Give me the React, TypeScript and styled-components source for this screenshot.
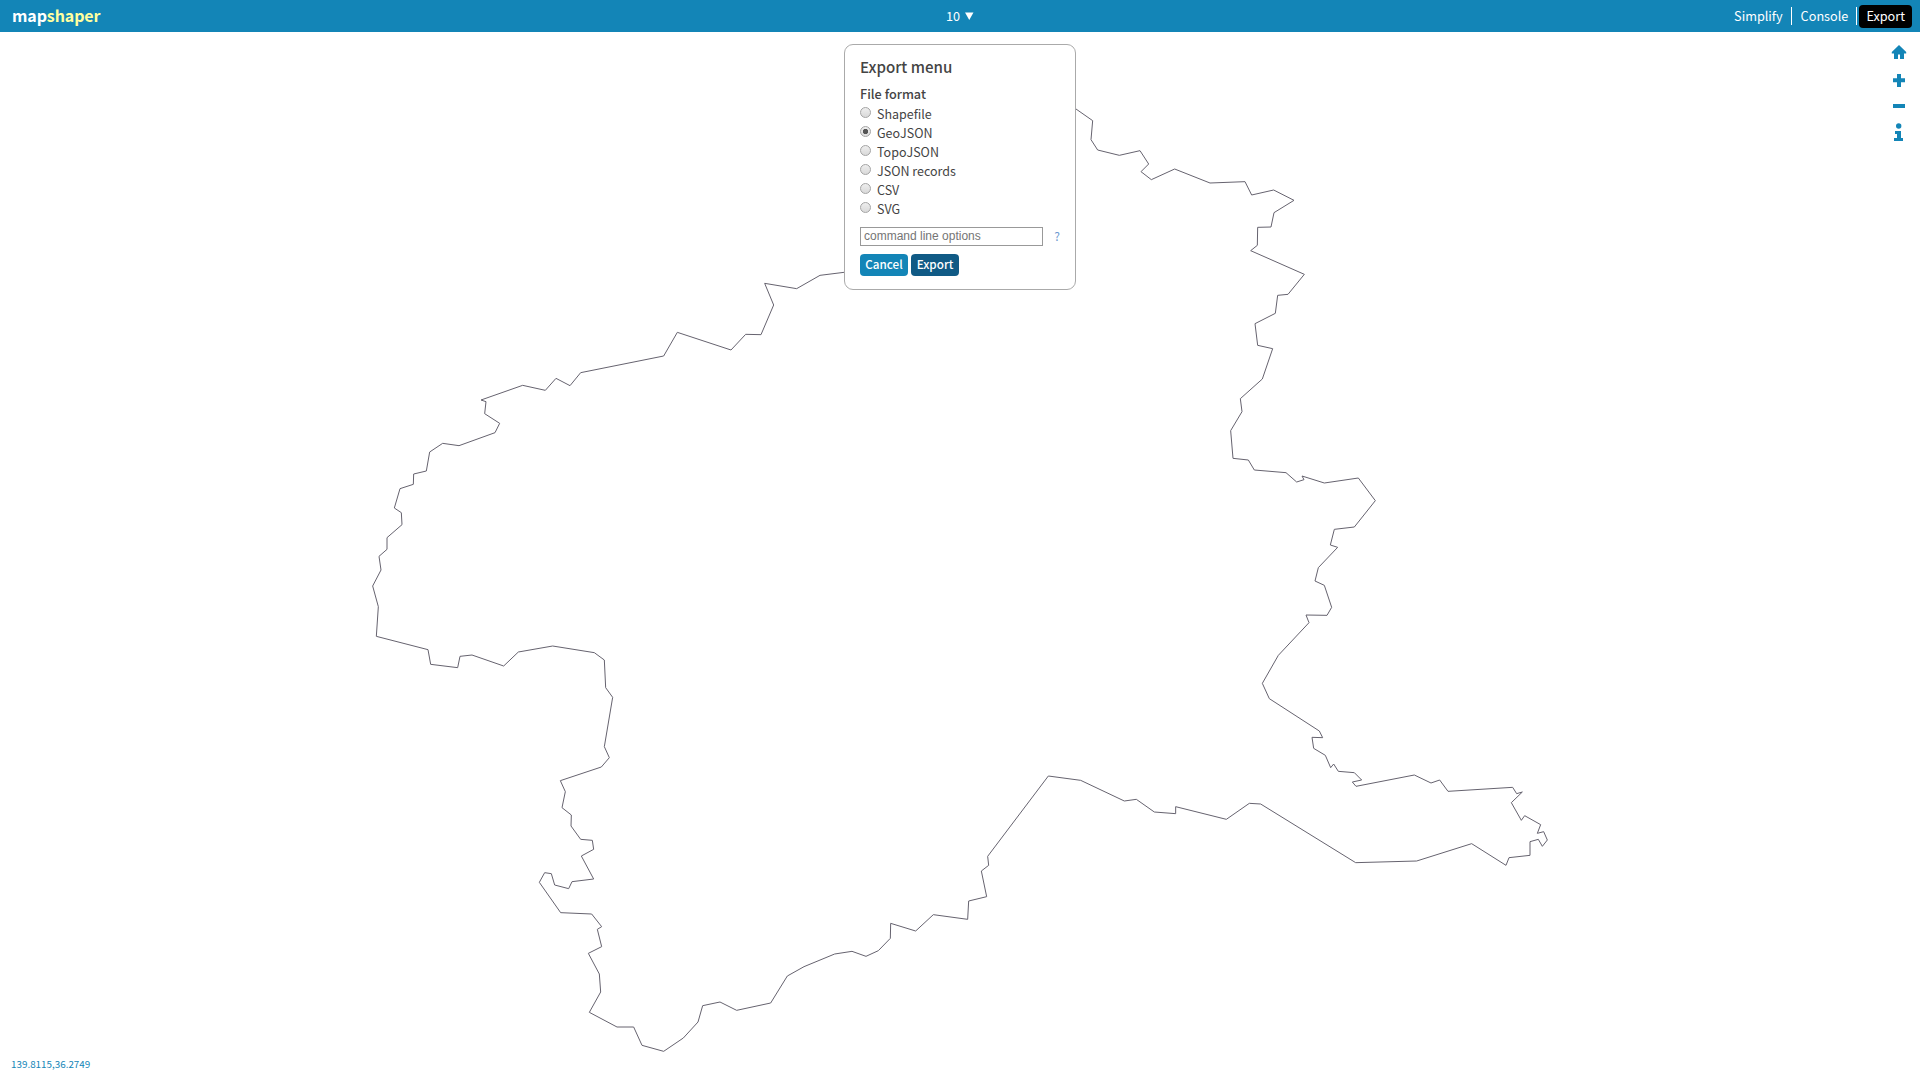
import React, { useState } from "react";
import styled, { createGlobalStyle } from "styled-components";

const GlobalStyle = createGlobalStyle`
  html, body, #root { height: 100%; margin: 0; }
  body {
    background: #fff;
    color: #444;
    font-family: "Noto Sans CJK JP", "Noto Sans", sans-serif;
    overflow: hidden;
  }
`;

const Page = styled.div`
  position: relative;
  display: flex;
  flex-direction: column;
  height: 100vh;
`;

const Header = styled.header`
  display: grid;
  grid-template-columns: 1fr auto 1fr;
  flex: none;
  height: 32px;
  box-sizing: border-box;
  padding: 0 8px 0 12px;
  background: #1385b7;
  color: #fff;
  font-size: 12.7px;
  line-height: 32px;
`;

const Logo = styled.div`
  font-size: 16px;
  font-weight: 700;
  line-height: 31px;
  letter-spacing: -0.1px;
`;

const LogoAccent = styled.span`
  color: #ffffa0;
`;

const LayerButton = styled.div`
  display: flex;
  align-items: center;
  gap: 5px;
  margin-right: 4px;
`;

const Nav = styled.nav`
  display: flex;
  justify-content: flex-end;
  align-items: center;
`;

const NavItem = styled.div<{ $active?: boolean }>`
  height: 23px;
  line-height: 21px;
  padding: 0 ${(p) => (p.$active ? 7 : 8)}px 0 ${(p) => (p.$active ? 7 : 9)}px;
  margin-left: ${(p) => (p.$active ? 2 : 0)}px;
  border-radius: 4px;
  background: ${(p) => (p.$active ? "#000" : "transparent")};
`;

const Divider = styled.div`
  width: 1px;
  height: 18px;
  background: #fff;
`;

const MapArea = styled.main`
  position: relative;
  flex: 1;
  min-height: 0;
`;

const MapCanvas = styled.svg`
  position: absolute;
  left: 0;
  top: -32px;
  fill: none;
  stroke: #66636f;
  stroke-width: 1;
`;

const MapTools = styled.div`
  position: absolute;
  top: 12px;
  right: 13px;
  display: flex;
  flex-direction: column;
  color: #1385b7;
`;

const ToolIcon = styled.svg`
  display: block;
  width: 16px;
  height: 98px;
  fill: #1385b7;
`;

const Coordinates = styled.div`
  position: absolute;
  left: 11px;
  bottom: 9px;
  color: #1385b7;
  font-size: 9.85px;
  line-height: 14px;
`;

const Panel = styled.section`
  position: absolute;
  top: 12px;
  left: 844px;
  width: 232px;
  height: 246px;
  box-sizing: border-box;
  padding: 10px 15px 0;
  border: 1px solid #aaa;
  border-radius: 9px;
  background: #fff;
`;

const Title = styled.h3`
  margin: 0;
  font-size: 15.1px;
  font-weight: 500;
  line-height: 22px;
`;

const Subtitle = styled.h4`
  margin: 7px 0 1px;
  font-size: 12.7px;
  font-weight: 500;
  line-height: 20px;
`;

const Options = styled.div`
  display: flex;
  flex-direction: column;
`;

const Option = styled.label`
  display: flex;
  height: 19px;
  gap: 6px;
  font-size: 12.5px;
  line-height: 17px;
`;

const Radio = styled.input`
  appearance: none;
  flex: none;
  width: 11px;
  height: 11px;
  margin: 2px 0 0;
  box-sizing: border-box;
  border: 1px solid #a4a4a4;
  border-radius: 50%;
  background: linear-gradient(#eee, #d9d9d9);
  &:checked {
    background: radial-gradient(circle, #555 0 2.3px, transparent 3px), linear-gradient(#eee, #ddd);
  }
`;

const CommandRow = styled.div`
  display: flex;
  align-items: flex-start;
  margin-top: 8px;
`;

const CommandInput = styled.input`
  width: 184px;
  height: 19px;
  box-sizing: border-box;
  padding: 0 3px 2px;
  border: 1px solid #999;
  border-radius: 0;
  outline: none;
  font: 12px "Liberation Sans", Arial, sans-serif;
  &::placeholder { color: #757575; }
`;

const Help = styled.span`
  margin-left: 11px;
  color: #6d9bd0;
  font-size: 12px;
  line-height: 17px;
`;

const Actions = styled.div`
  display: flex;
  gap: 3px;
  margin-top: 8px;
`;

const ActionButton = styled.button<{ $dark?: boolean }>`
  width: 48px;
  height: 22px;
  padding: 0 0 2px;
  border: 0;
  border-radius: 4px;
  background: ${(p) => (p.$dark ? "#105a85" : "#1385b7")};
  color: #fff;
  font-family: inherit;
  font-size: 11.7px;
  font-weight: 500;
  line-height: 20px;
`;

const formats = ["Shapefile", "GeoJSON", "TopoJSON", "JSON records", "CSV", "SVG"];

/* Boundary sections, each digitised at three units per pixel from its own origin. */
const sections = [
  {
    x: 360, y: 260,
    points: "1452,37 1380,46 1310,86 1214,70 1241,135 1203,224 1157,223 1113,270 952,217 911,288 662,338 630,377 588,355 556,391 488,376 363,420 378,425 374,461 419,490 405,518 297,557 248,550 209,576 199,633 161,642 160,673 120,686 103,744 124,758 126,794 81,833 81,868 57,889 63,930 38,978 55,1040 49,1129 204,1169 212,1213 293,1223 300,1189 336,1185 431,1218 475,1176 578,1158 703,1178 733,1200",
  },
  {
    x: 500, y: 640,
    points: "313,60 317,143 338,172 313,320 328,353 304,381 181,422 196,455 186,503 214,525 213,558 242,598 277,601 281,628 244,648 281,717 216,725 206,746 164,735 154,701 134,698 118,727 182,818 275,822 305,860 292,868 305,920 265,940 298,1002 302,1056 268,1117 351,1161 401,1161 426,1216 491,1234 550,1194 594,1146 608,1097 660,1086 710,1111 812,1089 862,1008 912,980 1004,942 1056,934 1098,949 1135,932 1171,895 1172,850 1247,873 1300,824 1403,838 1406,783 1460,770 1444,693 1466,676 1463,649",
  },
  {
    x: 960, y: 740,
    points: "83,349 265,108 362,121 493,183 529,178 583,216 647,221 647,200 799,238 868,190 902,192",
  },
  {
    x: 1200, y: 460,
    points: "182,1032 467,1208 650,1203 815,1151 918,1216 927,1193 990,1186 990,1145 1015,1138 1027,1159 1042,1140 1031,1115 1012,1120 1022,1094 974,1067 964,1081 934,1028 967,996 950,1001 938,982 744,994 719,960 693,969 643,945 468,979 457,966 485,960 463,938 415,934 401,912 392,923 376,886 341,865 336,832 368,833 358,813 208,716 187,670 235,586 327,488 318,465 381,466 395,442 373,376 345,363 355,323 413,262 391,255 403,208 463,201 526,122 475,54 373,69 306,48 312,59 290,66 258,38 163,30",
  },
  {
    x: 1060, y: 90,
    points: "583,1140 565,1110 519,1105 512,1022 546,965 541,926 607,867 638,776 593,766 585,701 646,670 653,616 684,613 733,553 572,482 592,466 593,412 633,411 642,368 702,331 641,300 575,315 555,275 450,279 344,237 274,269 243,245 266,222 240,182 178,196 113,180 93,149 98,92 48,57",
  },
];

export default function App() {
  const [format, setFormat] = useState("GeoJSON");
  return (
    <Page>
      <GlobalStyle />
      <Header>
        <Logo>map<LogoAccent>shaper</LogoAccent></Logo>
        <LayerButton>
          <span>10</span>
          <svg width="9" height="8" viewBox="0 0 9 8"><path d="M0 .5h8.500L4.250 8z" fill="#fff" /></svg>
        </LayerButton>
        <Nav>
          <NavItem>Simplify</NavItem>
          <Divider />
          <NavItem>Console</NavItem>
          <Divider />
          <NavItem $active>Export</NavItem>
        </Nav>
      </Header>
      <MapArea>
        <MapCanvas width="1920" height="1080">
          {sections.map((s) => (
            <polyline
              key={s.x}
              points={s.points}
              transform={`translate(${s.x} ${s.y}) scale(${1 / 3})`}
              vectorEffect="non-scaling-stroke"
            />
          ))}
        </MapCanvas>
        <MapTools>
          <ToolIcon viewBox="0 0 16 98">
            <path d="M8 1L.8 8v1.500H3V15h4v-4.500h2V15h4V9.500h2.200V8z" />
            <path d="M6 30h4v4.200h4v4H10V43H6v-4.800H2v-4h4z" />
            <path d="M2 60h12v4H2z" />
            <circle cx="7.700" cy="82" r="2.700" />
            <path d="M4 87h6v7h2v3H3v-3h3v-4H4z" />
          </ToolIcon>
        </MapTools>
        <Coordinates>139.8115,36.2749</Coordinates>
        <Panel>
          <Title>Export menu</Title>
          <Subtitle>File format</Subtitle>
          <Options>
            {formats.map((f) => (
              <Option key={f}>
                <Radio type="radio" name="format" checked={f === format} onChange={() => setFormat(f)} />
                {f}
              </Option>
            ))}
          </Options>
          <CommandRow>
            <CommandInput placeholder="command line options" />
            <Help>?</Help>
          </CommandRow>
          <Actions>
            <ActionButton>Cancel</ActionButton>
            <ActionButton $dark>Export</ActionButton>
          </Actions>
        </Panel>
      </MapArea>
    </Page>
  );
}
